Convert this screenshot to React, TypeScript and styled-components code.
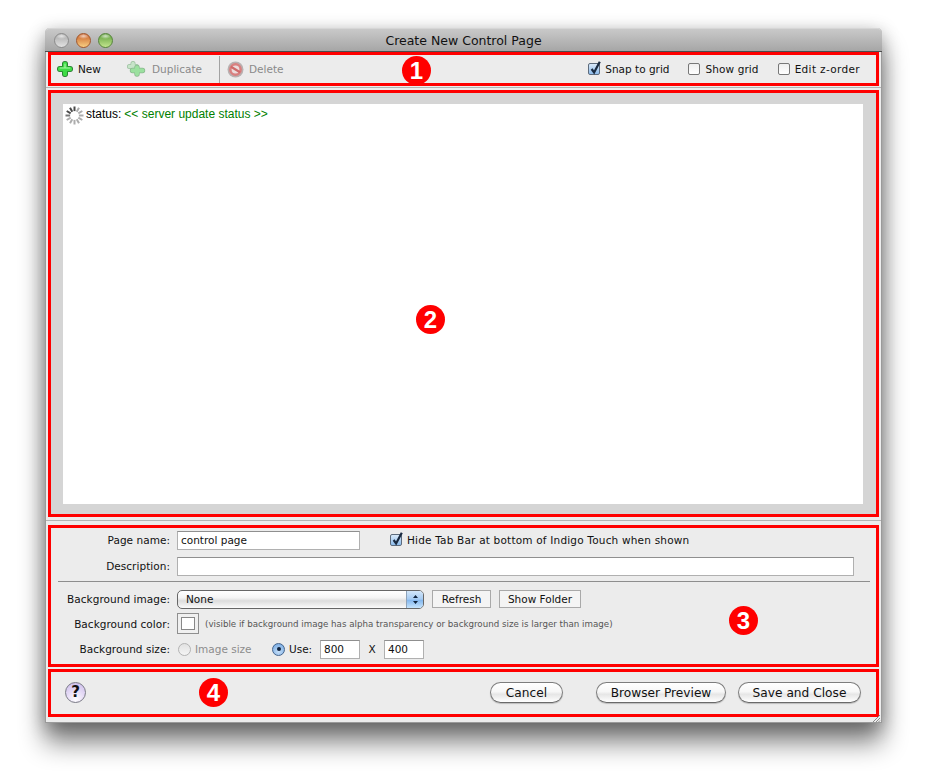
import styled, { createGlobalStyle } from 'styled-components';

const GlobalStyle = createGlobalStyle`
  html, body {
    margin: 0;
    padding: 0;
    background: #fff;
  }

  body {
    font-family: "DejaVu Sans", Verdana, sans-serif;
    font-size: 10.5px;
    color: #111;
  }
`;

const Page = styled.div`
  width: 926px;
  height: 771px;
  padding: 28px 0 0 45px;
  box-sizing: border-box;
  overflow: hidden;
`;

const Window = styled.div`
  position: relative;
  width: 837px;
  height: 695px;
  box-sizing: border-box;
  display: flex;
  flex-direction: column;
  background: #ececec;
  border: 1px solid #9a9a9a;
  border-top: 0;
  border-radius: 5px 5px 0 0;
  box-shadow: 0 20px 26px rgba(0, 0, 0, 0.48), 0 4px 18px rgba(0, 0, 0, 0.3);
`;

const TitleBar = styled.div`
  position: relative;
  flex: none;
  height: 24px;
  margin: 0 -1px;
  display: flex;
  align-items: center;
  justify-content: center;
  box-sizing: border-box;
  border-radius: 5px 5px 0 0;
  border-top: 1px solid #d6d6d6;
  border-bottom: 1px solid #4d4d4d;
  background: linear-gradient(#c9c9c9, #a6a6a6);
  font-size: 12.5px;
  color: #111;
`;

const Lights = styled.div`
  position: absolute;
  left: 9px;
  top: 4px;
  display: flex;
  gap: 7px;
`;

const Light = styled.span<{ $top: string; $bottom: string; $edge: string }>`
  width: 15px;
  height: 15px;
  border-radius: 50%;
  box-sizing: border-box;
  border: 1px solid ${(p) => p.$edge};
  background: radial-gradient(ellipse 45% 22% at 50% 16%, #ffffffb0, transparent),
    linear-gradient(${(p) => p.$top}, ${(p) => p.$bottom});
`;

const Section = styled.section<{ $height: number; $gap?: number }>`
  position: relative;
  flex: none;
  height: ${(p) => p.$height}px;
  margin: ${(p) => p.$gap ?? 0}px 2px 0 2px;
  box-sizing: border-box;
  border: 3px solid #f00;
`;

const Toolbar = styled(Section)`
  display: flex;
  align-items: center;
  padding: 0 16px 0 6px;
`;

const ToolButton = styled.div<{ $dim?: boolean; $gap: number; $width: number }>`
  display: flex;
  align-items: center;
  gap: ${(p) => p.$gap}px;
  width: ${(p) => p.$width}px;
  color: ${(p) => (p.$dim ? '#8a8a8a' : '#111')};
`;

const ToolDivider = styled.div`
  width: 1px;
  height: 27px;
  margin-right: 7px;
  background: #a2a2a2;
`;

const ToolOptions = styled.div`
  margin-left: auto;
  display: flex;
  gap: 19px;
`;

const Check = styled.label<{ $spacing?: number }>`
  display: flex;
  align-items: center;
  gap: 5px;
  white-space: nowrap;
  letter-spacing: ${(p) => p.$spacing ?? 0}px;
`;

const Box = styled.span<{ $on?: boolean }>`
  position: relative;
  width: 12px;
  height: 12px;
  flex: none;
  box-sizing: border-box;
  border: 1px solid ${(p) => (p.$on ? '#5d6b7c' : '#777')};
  border-radius: 2px;
  background: ${(p) =>
    p.$on ? 'linear-gradient(#d9e9f9, #8dbcec)' : 'linear-gradient(#eeeeee, #fff)'};
`;

const Tick = styled.svg`
  position: absolute;
  left: 0;
  top: -4px;
`;

const Divider = styled.div<{ $top: number }>`
  flex: none;
  height: 1px;
  margin-top: ${(p) => p.$top}px;
  background: #b4b4b4;
`;

const CanvasArea = styled(Section)`
  background: #d5d5d5;
  padding: 11px 13px 10px 12px;
`;

const Canvas = styled.div`
  height: 400px;
  background: #fff;
  display: flex;
  align-items: flex-start;
  padding: 2px 0 0 2px;
  box-sizing: border-box;
  font-family: "Liberation Sans", Arial, sans-serif;
  font-size: 12px;
  line-height: 16px;
  color: #000;
  gap: 2px;
`;

const StatusText = styled.span`
  color: #008000;
  margin-left: 1px;
`;

const Props = styled(Section)`
  display: flex;
  flex-direction: column;
`;

const Row = styled.div<{ $height: number }>`
  display: flex;
  align-items: center;
  height: ${(p) => p.$height}px;
  flex: none;
`;

const Label = styled.div`
  width: 119px;
  margin-right: 7px;
  text-align: right;
  flex: none;
  letter-spacing: 0.04px;
`;

const TextField = styled.input<{ $width: number }>`
  width: ${(p) => p.$width}px;
  height: 19px;
  box-sizing: border-box;
  flex: none;
  padding: 0 3px;
  margin: 0;
  border: 1px solid #b0b0b0;
  border-top-color: #8f8f8f;
  border-radius: 0;
  outline: none;
  background: #fff;
  font: inherit;
  color: #111;
`;

const CheckSlot = styled.div`
  width: 30px;
  flex: none;
`;

const PropsRule = styled.div`
  height: 1px;
  margin: 1px 6px 6px 7px;
  background: #8e8e8e;
  flex: none;
`;

const Select = styled.div`
  position: relative;
  width: 247px;
  height: 19px;
  box-sizing: border-box;
  padding-left: 8px;
  display: flex;
  align-items: center;
  border: 1px solid #666;
  border-radius: 5px;
  background: linear-gradient(#fff, #f4f4f4 40%, #dcdcdc 58%, #fbfbfb);
  overflow: hidden;
`;

const SelectArrows = styled.div`
  position: absolute;
  right: 0;
  top: 0;
  bottom: 0;
  width: 16px;
  display: flex;
  align-items: center;
  justify-content: center;
  background: linear-gradient(#d3e6f9, #a6cbf2 48%, #85b8ee 55%, #c6e4fc);
  border-left: 1px solid #8ea3ba;
`;

const PlainButton = styled.button<{ $left: number; $width: number }>`
  width: ${(p) => p.$width}px;
  height: 18px;
  margin: 0 0 0 ${(p) => p.$left}px;
  padding: 0;
  flex: none;
  box-sizing: border-box;
  border: 1px solid #a9a9a9;
  border-radius: 0;
  background: #f4f4f4;
  font: inherit;
  color: #111;
`;

const ColorWell = styled.div`
  width: 22px;
  height: 21px;
  box-sizing: border-box;
  flex: none;
  display: flex;
  align-items: center;
  justify-content: center;
  border: 1px solid #8f8f8f;
  background: #f0f0f0;
`;

const Swatch = styled.div`
  width: 12px;
  height: 11px;
  background: #fff;
  border: 1px solid #888;
`;

const Hint = styled.span`
  margin-left: 6px;
  font-size: 8.7px;
  color: #555;
  white-space: nowrap;
`;

const Radio = styled.label<{ $dim?: boolean; $left?: number; $width: number }>`
  display: flex;
  align-items: center;
  gap: 4px;
  flex: none;
  width: ${(p) => p.$width}px;
  margin-left: ${(p) => p.$left ?? 0}px;
  color: ${(p) => (p.$dim ? '#8c8c8c' : '#111')};
`;

const RadioDot = styled.span<{ $on?: boolean }>`
  width: 13px;
  height: 13px;
  flex: none;
  box-sizing: border-box;
  border-radius: 50%;
  display: flex;
  align-items: center;
  justify-content: center;
  border: 1px solid ${(p) => (p.$on ? '#44648c' : '#b3b3b3')};
  background: ${(p) =>
    p.$on
      ? 'radial-gradient(circle at 50% 70%, #c4def8, #6ea4e0)'
      : 'linear-gradient(#e2e2e2, #f4f4f4)'};

  &::after {
    content: '';
    width: 4px;
    height: 4px;
    border-radius: 50%;
    background: ${(p) => (p.$on ? '#10233c' : 'transparent')};
  }
`;

const Times = styled.span`
  width: 24px;
  flex: none;
  text-align: center;
`;

const Footer = styled(Section)`
  display: flex;
  align-items: center;
  padding: 0 15px 2px 14px;
`;

const HelpButton = styled.div`
  width: 21px;
  height: 21px;
  box-sizing: border-box;
  display: flex;
  align-items: center;
  justify-content: center;
  border-radius: 50%;
  border: 1px solid #7a7a86;
  background: radial-gradient(circle at 50% 85%, #fff 0, #e6dcf6 45%, #c9b8ea 100%);
  font-weight: bold;
  font-size: 15px;
  color: #111;
`;

const PillButton = styled.button<{ $width: number; $left: number; $auto?: boolean }>`
  width: ${(p) => p.$width}px;
  height: 21px;
  flex: none;
  margin: 0 0 0 ${(p) => (p.$auto ? 'auto' : `${p.$left}px`)};
  padding: 1px 0 0;
  box-sizing: border-box;
  border: 1px solid #7d7d7d;
  border-bottom-color: #6a6a6a;
  border-radius: 11px;
  background: linear-gradient(#fff, #f7f7f7 45%, #e6e6e6 60%, #fff);
  box-shadow: 0 1px 1px rgba(0, 0, 0, 0.2);
  font-family: inherit;
  font-size: 12.2px;
  color: #111;
`;

const Badge = styled.div<{ $x: number; $y: number }>`
  position: absolute;
  left: ${(p) => p.$x}px;
  top: ${(p) => p.$y}px;
  width: 29px;
  height: 29px;
  border-radius: 50%;
  background: #f00;
  display: flex;
  align-items: center;
  justify-content: center;
  color: #fff;
  font-family: "Liberation Sans", Arial, sans-serif;
  font-weight: bold;
  font-size: 24px;
`;

const Grip = styled.svg`
  position: absolute;
  right: 0;
  bottom: 0;
`;

const plusArms = 'M8 3v10M3 8h10';

function Plus() {
  return (
    <svg width="16" height="16" viewBox="0 0 16 16">
      <path d={plusArms} stroke="#24752c" strokeWidth="6" strokeLinecap="round" />
      <path d={plusArms} stroke="#3edb46" strokeWidth="4.4" strokeLinecap="round" />
      <path d="M3.2 7h9.6M8 3.2v3.6" stroke="#a8f5a6" strokeWidth="1.2" strokeLinecap="round" />
    </svg>
  );
}

function DuplicateIcon() {
  return (
    <svg width="20" height="18" viewBox="0 0 20 18">
      <g opacity="0.55" strokeLinecap="round">
        <path d="M7 3.5v6M3.5 6.5h7" stroke="#5d9e63" strokeWidth="5" />
        <path d="M7 3.5v6M3.5 6.5h7" stroke="#a9dfae" strokeWidth="3.6" />
        <path d="M11 7.5v6.5M6.5 10.5h10" stroke="#3c8f44" strokeWidth="5.4" />
        <path d="M11 7.5v6.5M6.5 10.5h10" stroke="#59d862" strokeWidth="4" />
      </g>
    </svg>
  );
}

function DeleteIcon() {
  return (
    <svg width="17" height="17" viewBox="0 0 17 17">
      <circle cx="8.5" cy="8.5" r="8" fill="#b9b1b1" />
      <circle cx="8.5" cy="8.5" r="6.4" fill="#d98080" />
      <circle cx="8.5" cy="8.5" r="3.9" fill="#ecdcdc" />
      <path d="M4 5.8l9 5.4" stroke="#cf6a6a" strokeWidth="2.2" />
    </svg>
  );
}

function Spinner() {
  const spokes = Array.from({ length: 12 }, (_, i) => i);
  return (
    <svg width="19" height="19" viewBox="0 0 19 19">
      {spokes.map((i) => (
        <rect
          key={i}
          x="8.5"
          y="0.5"
          width="2"
          height="4.6"
          fill={i >= 10 || i === 0 ? '#4a4a4a' : i === 9 ? '#777' : '#adadad'}
          transform={`rotate(${i * 30} 9.5 9.5)`}
        />
      ))}
    </svg>
  );
}

function Checkbox({ label, on, spacing }: { label: string; on?: boolean; spacing?: number }) {
  return (
    <Check $spacing={spacing}>
      <Box $on={on}>
        {on && (
          <Tick width="14" height="15" viewBox="0 0 14 15">
            <path d="M2.6 9l2.5 3.4L10.8 1.8" fill="none" stroke="#1a2a40" strokeWidth="2.2" />
          </Tick>
        )}
      </Box>
      {label}
    </Check>
  );
}

export default function App() {
  return (
    <Page>
      <GlobalStyle />
      <Window>
        <TitleBar>
          <Lights>
            <Light $top="#a9a9a9" $bottom="#e2e2e2" $edge="#8b8b8b" />
            <Light $top="#c9602a" $bottom="#f8cf82" $edge="#a2562a" />
            <Light $top="#5f9f3c" $bottom="#c3e58e" $edge="#55843a" />
          </Lights>
          Create New Control Page
        </TitleBar>

        <Toolbar $height={34}>
          <ToolButton $gap={5} $width={69}>
            <Plus />
            New
          </ToolButton>
          <ToolButton $dim $gap={6} $width={93}>
            <DuplicateIcon />
            Duplicate
          </ToolButton>
          <ToolDivider />
          <ToolButton $dim $gap={5} $width={60}>
            <DeleteIcon />
            Delete
          </ToolButton>
          <ToolOptions>
            <Checkbox label="Snap to grid" on />
            <Checkbox label="Show grid" spacing={0.1} />
            <Checkbox label="Edit z-order" spacing={0.35} />
          </ToolOptions>
          <Badge $x={351} $y={1}>1</Badge>
        </Toolbar>
        <Divider $top={1} />

        <CanvasArea $height={427} $gap={2}>
          <Canvas>
            <Spinner />
            status:
            <StatusText>&lt;&lt; server update status &gt;&gt;</StatusText>
          </Canvas>
          <Badge $x={365} $y={212}>2</Badge>
        </CanvasArea>
        <Divider $top={3} />

        <Props $height={142} $gap={4}>
          <Row $height={24}>
            <Label>Page name:</Label>
            <TextField $width={183} readOnly value="control page" />
            <CheckSlot />
            <Checkbox label="Hide Tab Bar at bottom of Indigo Touch when shown" on spacing={0.19} />
          </Row>
          <Row $height={28}>
            <Label>Description:</Label>
            <TextField $width={677} readOnly value="" />
          </Row>
          <PropsRule />
          <Row $height={22}>
            <Label>Background image:</Label>
            <Select>
              None
              <SelectArrows>
                <svg width="7" height="11" viewBox="0 0 7 11">
                  <path d="M3.5 1L6 4H1zM3.5 10L1 7h5z" fill="#10233c" />
                </svg>
              </SelectArrows>
            </Select>
            <PlainButton $left={8} $width={59}>Refresh</PlainButton>
            <PlainButton $left={8} $width={82}>Show Folder</PlainButton>
          </Row>
          <Row $height={27}>
            <Label>Background color:</Label>
            <ColorWell>
              <Swatch />
            </ColorWell>
            <Hint>
              (visible if background image has alpha transparency or background size is larger than image)
            </Hint>
          </Row>
          <Row $height={24}>
            <Label>Background size:</Label>
            <Radio $dim $left={1} $width={94}>
              <RadioDot />
              Image size
            </Radio>
            <Radio $width={48}>
              <RadioDot $on />
              Use:
            </Radio>
            <TextField $width={40} readOnly value="800" />
            <Times>X</Times>
            <TextField $width={40} readOnly value="400" />
          </Row>
          <Badge $x={678} $y={78}>3</Badge>
        </Props>

        <Footer $height={48} $gap={2}>
          <HelpButton>?</HelpButton>
          <PillButton $auto $left={0} $width={73}>Cancel</PillButton>
          <PillButton $left={33} $width={130}>Browser Preview</PillButton>
          <PillButton $left={12} $width={123}>Save and Close</PillButton>
          <Badge $x={148} $y={6}>4</Badge>
        </Footer>

        <Grip width="12" height="8" viewBox="0 0 12 8">
          <path d="M11 1L4 8M11 4L7 8M11 6.5L9.5 8" stroke="#8a8a8a" strokeWidth="1" />
        </Grip>
      </Window>
    </Page>
  );
}
